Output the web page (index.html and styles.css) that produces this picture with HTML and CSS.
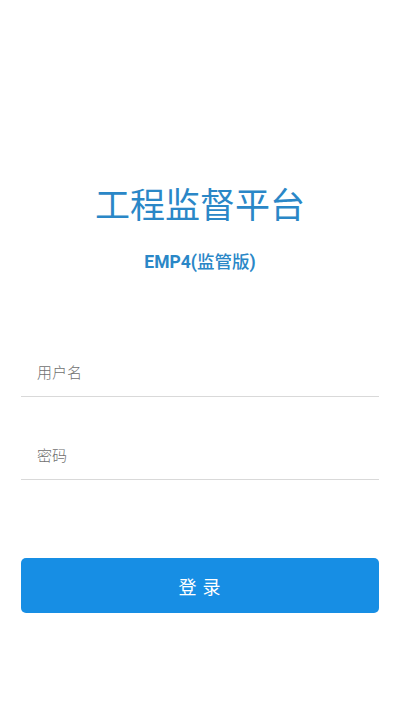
FILE: index.html
```html
<!DOCTYPE html>
<html lang="zh-CN">
<head>
<meta charset="utf-8">
<title>工程监督平台</title>
<link rel="stylesheet" href="styles.css">
</head>
<body>
<div class="page">
  <header class="brand">
    <h1 class="title">工程监督平台</h1>
    <p class="subtitle">EMP4(<span class="cjk">监管版</span>)</p>
  </header>
  <form class="form">
    <label class="field"><input class="input" type="text" placeholder="用户名"></label>
    <label class="field"><input class="input" type="password" placeholder="密码"></label>
    <button type="button" class="login">登 录</button>
  </form>
</div>
</body>
</html>
```
FILE: styles.css
```css
* { box-sizing: border-box; }
html, body { margin: 0; padding: 0; background: #fff; }
body {
  font-family: "Noto Sans CJK SC", "Noto Sans", sans-serif;
  width: 400px;
  height: 711px;
  overflow: hidden;
}
.page {
  display: flex;
  flex-direction: column;
  padding: 183px 21px 0;
}
.brand { text-align: center; }
.title {
  margin: 0;
  font-size: 35px;
  line-height: 40px;
  font-weight: 400;
  color: #2a87c7;
  letter-spacing: 0;
}
.subtitle {
  margin: 28px 0 0;
  height: 20px;
  font-family: Roboto, "Noto Sans CJK SC", sans-serif;
  font-size: 17.5px;
  line-height: 20px;
  font-weight: 700;
  color: #2a87c7;
}
.subtitle .cjk {
  font-family: "Noto Sans CJK SC", sans-serif;
  font-weight: 500;
}
.form {
  display: flex;
  flex-direction: column;
  margin-top: 75px;
}
.field {
  display: block;
  height: 51px;
  border-bottom: 1px solid #d9d9d9;
}
.field + .field { margin-top: 32px; }
.input {
  display: block;
  width: 100%;
  height: 50px;
  border: 0;
  outline: none;
  padding: 0 16px;
  font-family: "Noto Sans CJK SC", "Noto Sans", sans-serif;
  font-size: 15px;
  font-weight: 300;
  color: #333;
  background: transparent;
}
.input::placeholder { color: #6f6f6f; }
.login {
  margin-top: 78px;
  height: 55px;
  border: 0;
  border-radius: 5px;
  background: #178ee4;
  color: #fff;
  font-family: "Noto Sans CJK SC", "Noto Sans", sans-serif;
  font-size: 18px;
  letter-spacing: 1px;
  padding: 0;
}
```
